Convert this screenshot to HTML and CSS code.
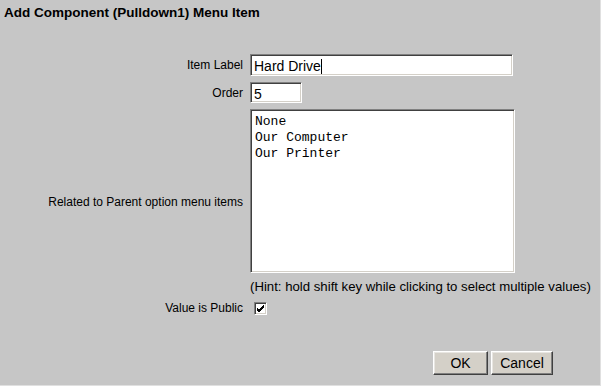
FILE: index.html
```html
<!DOCTYPE html>
<html>
<head lang="en">
    <meta charset="UTF-8">
    <title>Add Component Menu Item</title>
    <link rel="stylesheet" href="styles.css">
</head>
<body>
<div class="page">
    <h1 class="title">Add Component (Pulldown1) Menu Item</h1>
    <div class="form">
        <div class="lbl">Item Label</div>
        <div class="field">
            <div class="input wide">Hard Drive<span class="caret"></span></div>
        </div>

        <div class="lbl">Order</div>
        <div class="field">
            <div class="input short">5</div>
        </div>

        <div class="lbl">Related to Parent option menu items</div>
        <div class="field">
            <div class="list">
                <div>None</div>
                <div>Our Computer</div>
                <div>Our Printer</div>
            </div>
            <div class="hint">(Hint: hold shift key while clicking to select multiple values)</div>
        </div>

        <div class="lbl">Value is Public</div>
        <div class="field">
            <span class="check">
                <svg width="9" height="8" viewBox="0 0 9 8"><path d="M1 3 L3 5 L8 0 M1 4 L3 6 L8 1 M1 5 L3 7 L8 2" stroke="#000" stroke-width="1" fill="none"/></svg>
            </span>
        </div>
    </div>
    <div class="actions">
        <button class="btn ok">OK</button>
        <button class="btn cancel">Cancel</button>
    </div>
</div>
</body>
</html>
```

FILE: styles.css
```css
* {
    margin: 0;
    padding: 0;
    box-sizing: border-box;
}

body {
    background-color: #c6c6c6;
    font-family: "Liberation Sans", Arial, sans-serif;
    color: #000;
}

.page {
    width: 601px;
    height: 386px;
    border-right: 1px solid #e0e0e0;
    border-bottom: 1px solid #e0e0e0;
}

.title {
    font-size: 13.5px;
    font-weight: bold;
    line-height: 16px;
    padding: 5px 0 0 4px;
    height: 54px;
}

.form {
    display: grid;
    grid-template-columns: 243px 1fr;
    column-gap: 7px;
    row-gap: 6px;
    align-items: center;
}

.lbl {
    text-align: right;
    font-size: 12px;
}

.field {
    display: flex;
    flex-direction: column;
    align-items: flex-start;
}

.input {
    background-color: #fff;
    border-top: 1px solid #808080;
    border-left: 1px solid #808080;
    border-right: 1px solid #fff;
    border-bottom: 1px solid #fff;
    box-shadow: inset 1px 1px 0 #404040, inset -1px -1px 0 #d4d0c8;
    font-size: 14px;
    line-height: 16px;
    padding: 3px 3px;
    height: 22px;
}

.wide {
    width: 263px;
}

.short {
    width: 52px;
    height: 21px;
}

.caret {
    display: inline-block;
    width: 1px;
    height: 15px;
    background-color: #000;
    vertical-align: -3px;
}

.list {
    width: 265px;
    height: 164px;
    background-color: #fff;
    border-top: 1px solid #808080;
    border-left: 1px solid #808080;
    border-right: 1px solid #fff;
    border-bottom: 1px solid #fff;
    box-shadow: inset 1px 1px 0 #404040, inset -1px -1px 0 #d4d0c8;
    font-family: "Liberation Mono", "Courier New", monospace;
    font-size: 13px;
    line-height: 16px;
    padding: 4px 4px;
}

.hint {
    font-size: 13.2px;
    line-height: 16px;
    margin-top: 6px;
    white-space: nowrap;
}

.check {
    display: flex;
    align-items: center;
    justify-content: center;
    width: 13px;
    height: 13px;
    margin: 1px 0 0 4px;
    background-color: #fff;
    border-top: 1px solid #808080;
    border-left: 1px solid #808080;
    border-right: 1px solid #fff;
    border-bottom: 1px solid #fff;
    box-shadow: inset 1px 1px 0 #404040, inset -1px -1px 0 #d4d0c8;
}

.actions {
    display: flex;
    justify-content: flex-end;
    gap: 3px;
    padding-right: 47px;
    margin-top: 36px;
}

.btn {
    font-family: "Liberation Sans", Arial, sans-serif;
    font-size: 14px;
    height: 24px;
    padding: 0;
    background-color: #d4d0c8;
    border-top: 1px solid #fff;
    border-left: 1px solid #fff;
    border-right: 1px solid #404040;
    border-bottom: 1px solid #404040;
    box-shadow: inset -1px -1px 0 #808080, inset 1px 1px 0 #e8e6e2;
}

.ok {
    width: 55px;
}

.cancel {
    width: 62px;
}
```
